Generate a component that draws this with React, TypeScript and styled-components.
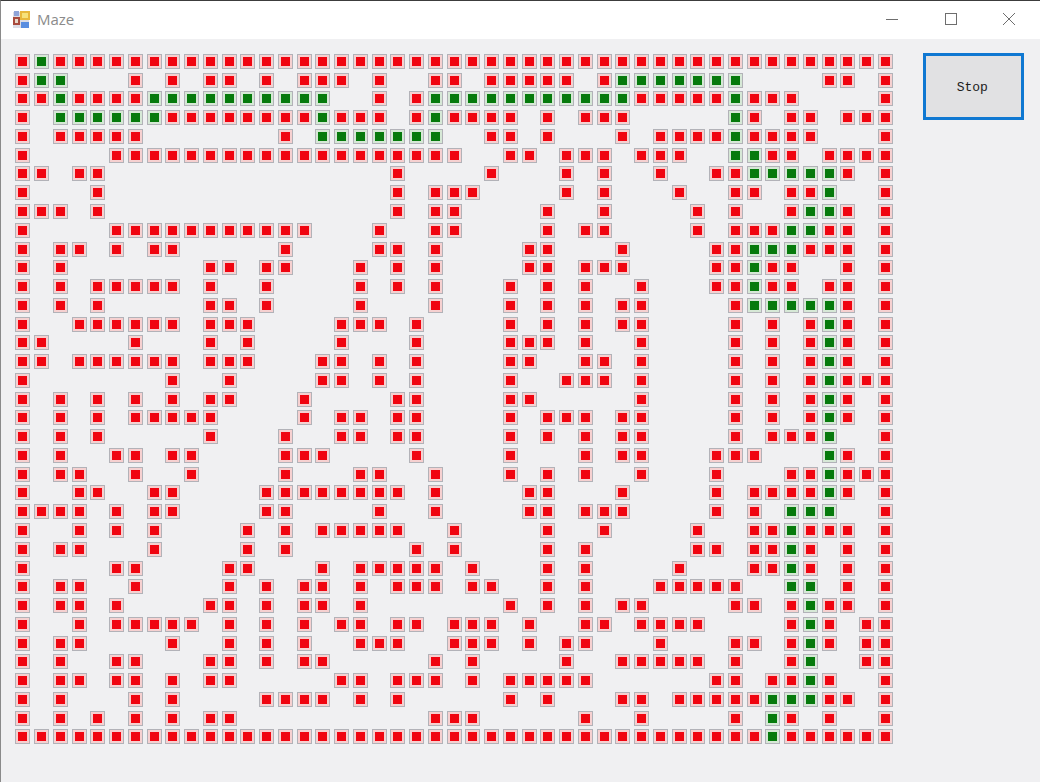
import React from "react";
import styled, { createGlobalStyle } from "styled-components";

const COLS = 47;
const ROWS = 37;

// each row: red columns | green columns, "a-b" means a run
const MAZE: [string, string?][] = [
  ["0,2-46", "1"],
  ["0,6,8,10,11,13,15-17,19,22,23,25-29,31,43,44,46", "1,2,32-38"],
  ["0,1,3-6,19,21,33-37,39-41,46", "2,7-16,22-32,38"],
  ["0,8-15,17-19,21,23-26,28,30-32,39,41,42,44-46", "2-7,16,22,38"],
  ["0,2-6,14,25,26,28,32,34-37,39-42,46", "16-22,38"],
  ["0,5-23,26,27,29-31,33-35,40,41,43-46", "38,39"],
  ["0,1,3,4,20,25,29,31,34,37,38,44,46", "39-43"],
  ["0,4,20,22-24,29,31,35,38,39,41,42,46", "43"],
  ["0-2,4,20,22,23,28,31,36,38,41,44,46", "42,43"],
  ["0,5-15,19,22,23,28,30,31,36,38-40,43,44,46", "41,42"],
  ["0,2,3,5,7,8,14,19,20,22,27,28,32,37,38,42-44,46", "39-41"],
  ["0,2,10,11,13,14,18,20,22,27,28,30-32,37,38,40,41,44,46", "39"],
  ["0,2,4-8,10,13,18,20,22,26,28,30,33,37,38,40,41,43,44,46", "39"],
  ["0,2,4,10,11,13,18,22,26,28,30,32,33,38,44,46", "39-43"],
  ["0,3-8,10-12,17-19,21,26,28,30,32,33,38,40,42,44,46", "43"],
  ["0,1,6,10,12,17,21,26-28,30,33,38,40,42,44,46", "43"],
  ["0,1,3-8,10-12,16,17,19,21,26,27,30,31,33,38,40,42,44,46", "43"],
  ["0,8,11,16,17,19,21,26,29-31,33,38,40,42,44-46", "43"],
  ["0,2,4,6,8,10,11,15,20,21,26,27,33,38,40,42,44,46", "43"],
  ["0,2,4,6-10,15,17,18,20,21,26,28-30,32,33,38,40,42,44,46", "43"],
  ["0,2,4,10,14,17,18,20,21,26,28,30,32,33,38,40-42,46", "43"],
  ["0,2,5,6,8,9,14-16,21,26,30,32,33,37-39,44,46", "43"],
  ["0,2,3,6,9,14,18,19,22,26,28,30,33,37,41,42,44-46", "43"],
  ["0,3,4,7,8,13-20,22,27,28,32,37,39-42,44,46", "43"],
  ["0-3,5,7,8,13,14,19,22,27,28,30-32,37,39,46", "41-43"],
  ["0,3,5,7,12,14,16-20,23,28,31,36,39,40,42-44,46", "41"],
  ["0,2,3,7,12,14,21,23,28,30,36,37,39,40,42,44,46", "41"],
  ["0,5,6,11,12,16,18-22,24,28,30,35,39,40,42,44,46", "41"],
  ["0,2,3,6,11,13,15,16,18,20-22,24,25,28,30,34-38,44,46", "41,42"],
  ["0,2,3,5,10,11,13,15,16,18,26,28,30,32,33,38,39,41,43,44,46", "42"],
  ["0,3,5-9,11,13,15,17,18,20,21,23-25,27,30,31,33-36,41,43,45,46", "42"],
  ["0,2,3,8,11,13,15,18-20,23-25,27,29,30,34,38,39,41,43,45,46", "42"],
  ["0,2,5,6,10,11,13,15,16,22,24,29,32-36,38,41,45,46", "42"],
  ["0,2,3,5,6,8,10,11,17,18,20-22,24,26-30,37,38,40,41,43,46", "42"],
  ["0,2,6,8,13-16,18,20,26,28,32,33,35-39,43,44,46", "40-42"],
  ["0,2,4,6,8,10,11,22-24,30,33,38,41,43,46", "40"],
  ["0-39,41-46", "40"],
];

const expand = (spec = "") => {
  const out = new Set<number>();
  spec.split(",").filter(Boolean).forEach((part) => {
    const [a, b] = part.split("-").map(Number);
    for (let i = a; i <= (b ?? a); i++) out.add(i);
  });
  return out;
};

const GlobalStyle = createGlobalStyle`
  html, body {
    margin: 0;
    padding: 0;
    background: #f0f0f2;
  }
`;

const Window = styled.div`
  width: 1040px;
  height: 782px;
  box-sizing: border-box;
  display: flex;
  flex-direction: column;
  border-top: 1px solid #3c3c3c;
  border-left: 1px solid #8a8a8a;
  background: #f0f0f2;
  overflow: hidden;
`;

const TitleBar = styled.div`
  height: 38px;
  flex: none;
  display: flex;
  align-items: center;
  background: #ffffff;
  padding-left: 11px;
`;

const AppIcon = styled.svg`
  width: 19px;
  height: 19px;
  flex: none;
  margin-top: -2px;
`;

const Title = styled.span`
  margin-left: 6px;
  margin-top: -2px;
  font-family: "Open Sans", "Liberation Sans", sans-serif;
  font-size: 15px;
  color: #8b8b8b;
`;

const WindowControls = styled.div`
  margin-left: auto;
  display: flex;
  margin-right: 1.75px;
`;

const ControlButton = styled.div`
  width: 58.5px;
  height: 38px;
  display: flex;
  align-items: center;
  justify-content: center;
  svg {
    width: 14px;
    height: 14px;
    margin-top: -2px;
    stroke: #6e6e6e;
    fill: none;
    stroke-width: 1;
  }
`;

const Content = styled.div`
  flex: 1;
  display: flex;
  align-items: flex-start;
  padding: 13px 0 0 12.5px;
`;

const Board = styled.div`
  display: grid;
  grid-template-columns: repeat(${COLS}, 18.75px);
  grid-template-rows: repeat(${ROWS}, 18.78px);
  place-items: center;
  filter: blur(0.3px);
`;

const Cell = styled.div<{ $path: boolean }>`
  width: 15px;
  height: 15px;
  box-sizing: border-box;
  display: flex;
  align-items: center;
  justify-content: center;
  border: 1px solid #b2b2b8;
  background: ${({ $path }) => ($path ? "#d6e8d6" : "#f6d0d0")};
  &::after {
    content: "";
    width: 9px;
    height: 9px;
    background: ${({ $path }) => ($path ? "#067a0c" : "#f00410")};
  }
`;

const StopButton = styled.button`
  width: 101px;
  height: 67px;
  margin: 1px 0 0 28.5px;
  box-sizing: border-box;
  flex: none;
  border: 3px solid #0f78d2;
  background: #e1e1e3;
  color: #1c1c1c;
  font-family: "Liberation Mono", "DejaVu Sans Mono", monospace;
  font-size: 13px;
  padding: 2px 3px 0 0;
`;

const cells = MAZE.flatMap(([red, green], r) => {
  const reds = expand(red);
  const greens = expand(green);
  return Array.from({ length: COLS }, (_, c) =>
    greens.has(c) ? (
      <Cell key={`${r}-${c}`} $path />
    ) : reds.has(c) ? (
      <Cell key={`${r}-${c}`} $path={false} />
    ) : (
      <span key={`${r}-${c}`} />
    )
  );
});

export default function App() {
  return (
    <Window>
      <GlobalStyle />
      <TitleBar>
        <AppIcon viewBox='0 0 19 19'>
          <rect x='1' y='2' width='16' height='16' fill='#dcdce4' />
          <rect x='2' y='1' width='5' height='5' fill='#8fa4d8' />
          <rect x='8' y='1' width='10' height='9' fill='#e8b83c' />
          <rect x='10' y='3' width='6' height='5' fill='#f6e27a' />
          <rect x='1' y='7' width='7' height='8' fill='#a84a3c' />
          <rect x='3' y='9' width='3' height='4' fill='#e8d8c8' />
          <rect x='9' y='12' width='8' height='6' fill='#5a8ee0' />
        </AppIcon>
        <Title>Maze</Title>
        <WindowControls>
          <ControlButton>
            <svg viewBox='0 0 14 14'>
              <path d='M1 7.5H13' />
            </svg>
          </ControlButton>
          <ControlButton>
            <svg viewBox='0 0 14 14'>
              <rect x='1.5' y='1.5' width='11' height='11' />
            </svg>
          </ControlButton>
          <ControlButton>
            <svg viewBox='0 0 14 14'>
              <path d='M1 1L13 13M13 1L1 13' />
            </svg>
          </ControlButton>
        </WindowControls>
      </TitleBar>
      <Content>
        <Board>{cells}</Board>
        <StopButton>Stop</StopButton>
      </Content>
    </Window>
  );
}
